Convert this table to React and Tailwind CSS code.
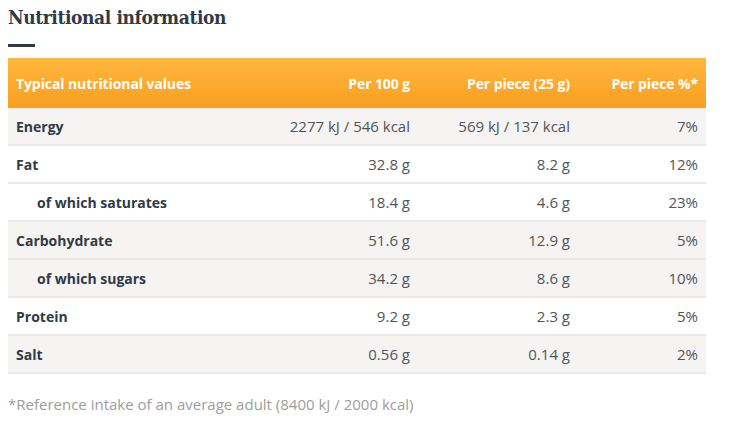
import React from "react";

const rows = [
  { label: "Energy", a: "2277 kJ / 546 kcal", b: "569 kJ / 137 kcal", c: "7%", gray: true },
  { label: "Fat", a: "32.8 g", b: "8.2 g", c: "12%", gray: false },
  { label: "of which saturates", a: "18.4 g", b: "4.6 g", c: "23%", gray: false, sub: true },
  { label: "Carbohydrate", a: "51.6 g", b: "12.9 g", c: "5%", gray: true },
  { label: "of which sugars", a: "34.2 g", b: "8.6 g", c: "10%", gray: true, sub: true },
  { label: "Protein", a: "9.2 g", b: "2.3 g", c: "5%", gray: false },
  { label: "Salt", a: "0.56 g", b: "0.14 g", c: "2%", gray: true },
];

export default function App() {
  return (
    <div className="w-[750px] h-[428px] bg-white pl-2 pt-[4px] font-['Open_Sans',sans-serif] text-[#2f3b45]">
      <h2 className="font-['DejaVu_Serif_Condensed','DejaVu_Serif',serif] font-bold text-[19px] leading-[26px] tracking-[-0.4px] text-[#2f3b45]">
        Nutritional information
      </h2>
      <div className="mt-[14px] w-[27px] h-[3px] bg-[#2f3b45]" />
      <div className="mt-[11px] w-[698px]">
        <div className="grid grid-cols-[250px_160px_160px_128px] h-[50px] items-center bg-gradient-to-b from-[#fdb83c] to-[#f99e1e] text-white font-bold text-[14px] tracking-[-0.1px]">
          <div className="pl-2">Typical nutritional values</div>
          <div className="text-right pr-2">Per 100 g</div>
          <div className="text-right pr-2">Per piece (25 g)</div>
          <div className="text-right pr-2">Per piece %*</div>
        </div>
        {rows.map((r, i) => (
          <div
            key={i}
            className={`grid grid-cols-[250px_160px_160px_128px] h-[38px] items-center border-b-2 border-[#ebe9e7] ${
              r.gray ? "bg-[#f5f4f3]" : "bg-white"
            }`}
          >
            <div className={`font-bold text-[14px] text-[#2f3b45] ${r.sub ? "pl-[29px]" : "pl-2"}`}>{r.label}</div>
            <div className="text-right pr-2 text-[15px] text-[#505459] font-normal">{r.a}</div>
            <div className="text-right pr-2 text-[15px] text-[#505459] font-normal">{r.b}</div>
            <div className="text-right pr-2 text-[15px] text-[#505459] font-normal">{r.c}</div>
          </div>
        ))}
      </div>
      <p className="mt-[19px] text-[15px] text-[#9d9d9d] font-normal">
        *Reference intake of an average adult (8400 kJ / 2000 kcal)
      </p>
    </div>
  );
}
